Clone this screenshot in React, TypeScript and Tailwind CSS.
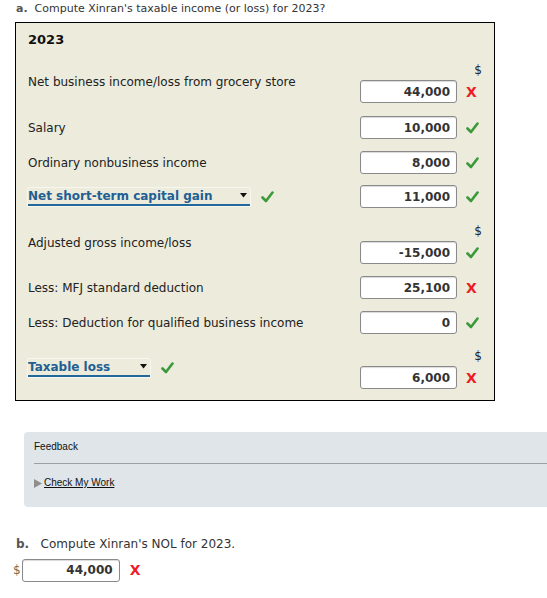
import type { ReactNode } from 'react';

const verdana = { fontFamily: '"DejaVu Sans", Verdana, sans-serif' };

function Check() {
  return (
    <svg width="13" height="12" viewBox="0 0 13 12" className="shrink-0">
      <path d="M1.5 6.5 L5 10 L11.5 1.5" fill="none" stroke="#3a9a3a" strokeWidth="2.6" strokeLinecap="round" strokeLinejoin="round" />
    </svg>
  );
}

function Cross() {
  return <span className="text-[14px] font-bold leading-none text-[#ee1c24]">X</span>;
}

function Mark({ ok }: { ok: boolean }) {
  return ok ? <Check /> : <Cross />;
}

function Amount({ value, w = 'w-[97px]' }: { value: string; w?: string }) {
  return (
    <div
      className={`${w} h-[23px] bg-white border border-[#8a8a8a] rounded-[3px] shadow-[inset_0_1px_1px_rgba(0,0,0,0.15)] flex items-center justify-end pr-[6px] text-[12px] font-bold text-[#333]`}
    >
      {value}
    </div>
  );
}

function Dropdown({ label, w }: { label: string; w: string }) {
  return (
    <div className="flex items-center gap-[11px]">
      <div className={`${w} h-[18px] flex items-center justify-between border-b-2 border-[#23689b] rounded-t-[2px] shadow-[0_0_0_1px_rgba(255,255,255,0.6)]`}>
        <span className="text-[12px] font-bold text-[#1f5f94] leading-none">{label}</span>
        <svg width="7" height="5" viewBox="0 0 7 5" className="mr-[3px]">
          <path d="M0 0 L7 0 L3.5 4.5 Z" fill="#111" />
        </svg>
      </div>
      <Check />
    </div>
  );
}

function Row({ label, value, ok, dollar, mt }: { label: ReactNode; value: string; ok: boolean; dollar?: boolean; mt: string }) {
  return (
    <div className={`flex items-center ${mt}`}>
      <div className="flex-1 text-[12px] text-[#222]">{label}</div>
      <div className="flex flex-col items-end">
        {dollar && <div className="h-[20px] pr-[12px] text-[12px] leading-[20px] text-[#222]">$</div>}
        <div className="flex items-center">
          <Amount value={value} />
          <div className="w-[37px] pl-[9px] flex items-center">
            <Mark ok={ok} />
          </div>
        </div>
      </div>
    </div>
  );
}

export default function App() {
  return (
    <div className="w-[547px] h-[598px] overflow-hidden bg-white" style={verdana}>
      <div className="pl-[16px] pt-[1px] text-[11px] text-[#333] h-[22px] leading-[16px]">
        <span className="font-bold text-[#555]">a.</span>&nbsp; Compute Xinran's taxable income (or loss) for 2023?
      </div>

      <div className="ml-[15px] w-[480px] border border-black bg-[#ecebdc] pl-[12px] pb-[11px]">
        <div className="pt-[9px] text-[13px] font-bold text-[#111] leading-[16px]">2023</div>

        <Row mt="mt-[12px]" dollar label="Net business income/loss from grocery store" value="44,000" ok={false} />
        <Row mt="mt-[13px]" label="Salary" value="10,000" ok />
        <Row mt="mt-[12px]" label="Ordinary nonbusiness income" value="8,000" ok />
        <Row mt="mt-[11px]" label={<Dropdown label="Net short-term capital gain" w="w-[222px]" />} value="11,000" ok />
        <Row mt="mt-[13px]" dollar label="Adjusted gross income/loss" value="-15,000" ok />
        <Row mt="mt-[12px]" label="Less: MFJ standard deduction" value="25,100" ok={false} />
        <Row mt="mt-[12px]" label="Less: Deduction for qualified business income" value="0" ok />
        <Row mt="mt-[12px]" dollar label={<Dropdown label="Taxable loss" w="w-[122px]" />} value="6,000" ok={false} />
      </div>

      <div
        className="ml-[24px] mt-[31px] w-[560px] h-[75px] rounded-[4px] bg-[#dfe5e8] pl-[10px] pt-[9px] text-[10px] text-[#111]"
        style={{ fontFamily: '"Liberation Sans", Arial, sans-serif' }}
      >
        <div className="leading-[12px]">Feedback</div>
        <div className="mt-[10px] border-t border-[#9a9fa2]" />
        <div className="mt-[13px] flex items-center gap-[2px]">
          <svg width="8" height="9" viewBox="0 0 8 9">
            <path d="M0 0 L8 4.5 L0 9 Z" fill="#8e8e8e" />
          </svg>
          <span className="underline leading-[12px]">Check My Work</span>
        </div>
      </div>

      <div className="pl-[16px] mt-[29px] text-[12px] text-[#333] leading-[16px]">
        <span className="font-bold text-[#555]">b.</span>&nbsp;&nbsp; Compute Xinran's NOL for 2023.
      </div>
      <div className="mt-[6px] pl-[13px] flex items-center">
        <span className="text-[12px] text-[#7a6a4a] pr-[1px]">$</span>
        <Amount value="44,000" w="w-[98px]" />
        <span className="ml-[10px]">
          <Cross />
        </span>
      </div>
    </div>
  );
}
